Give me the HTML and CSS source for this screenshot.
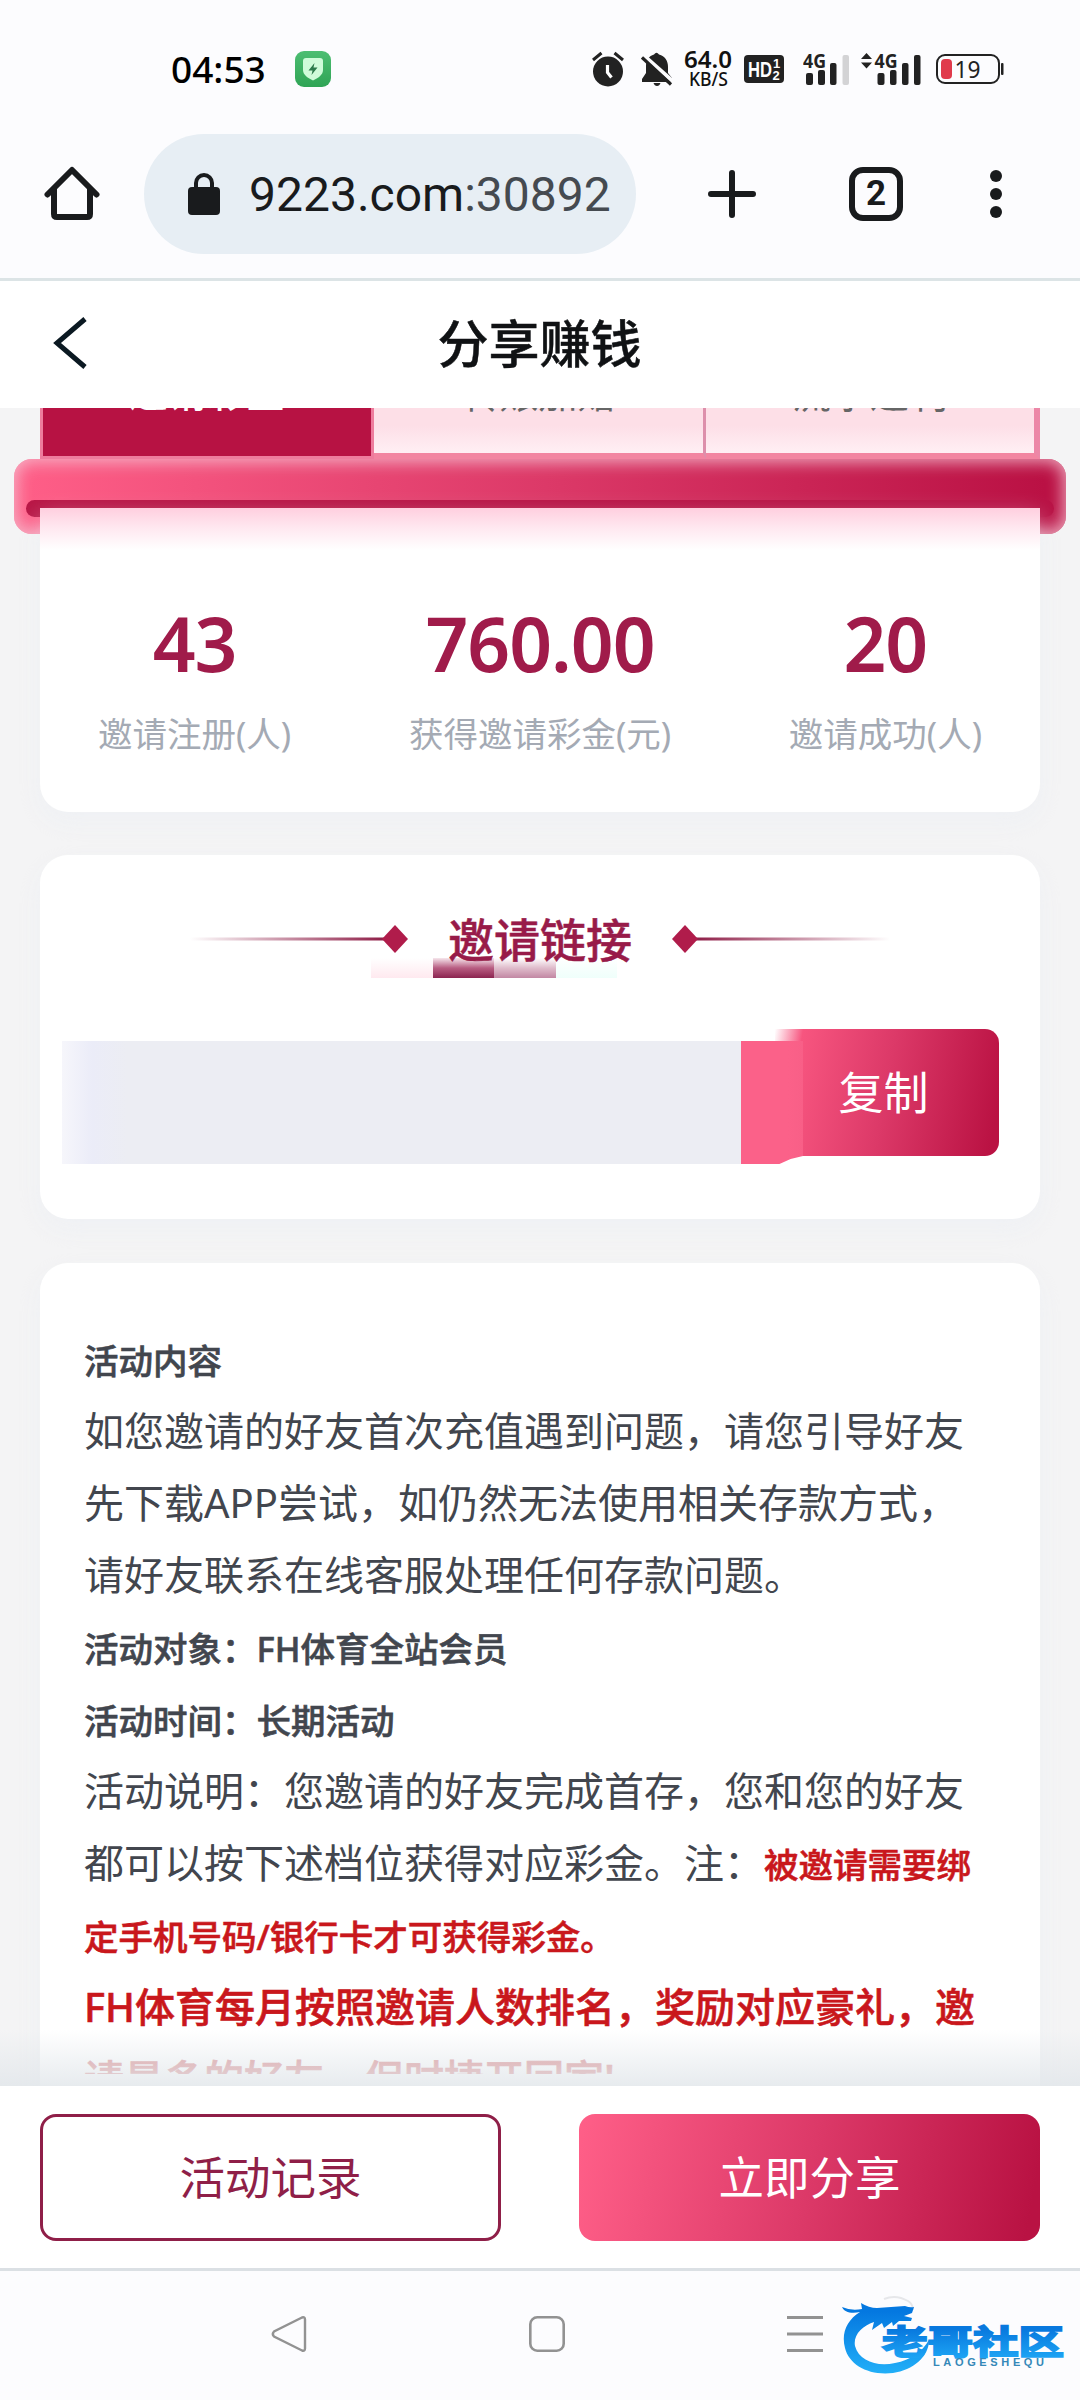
FILE: index.html
```html
<!DOCTYPE html>
<html lang="zh-CN">
<head>
<meta charset="utf-8">
<title>分享赚钱</title>
<link rel="stylesheet" href="styles.css">
</head>
<body>
<div class="status">
  <span class="clock">04:53</span>
  <svg class="shield" width="36" height="36" viewBox="0 0 36 36">
    <defs><linearGradient id="green" x2="0" y2="1"><stop offset="0" stop-color="#4dbe72"/><stop offset="1" stop-color="#2fa455"/></linearGradient></defs>
    <rect width="36" height="36" rx="9" fill="url(#green)"/>
    <path d="M11 7h14q3 0 3 3v9c0 5-5 8-10 10.500C13 27 8 24 8 19v-9q0-3 3-3z" fill="#cffbd9"/>
    <path d="M19.500 12l-6 7.500h4L16.500 24l6-7.500h-4z" fill="#2c7a4b"/>
  </svg>
  <div class="indicators">
    <svg width="32" height="36" viewBox="0 0 32 36">
      <circle cx="16" cy="20.500" r="15" fill="#222"/>
      <path d="M1 9l8.500-7M31 9l-8.500-7" stroke="#222" stroke-width="3" fill="none"/>
      <path d="M15.500 14v7.500l4 5" stroke="#fff" stroke-width="3.200" fill="none"/>
    </svg>
    <svg class="bell" width="32" height="36" viewBox="0 0 32 36">
      <path d="M1 31v-3l4-6v-7C5 9 8 5 13 3.500Q15.500 0 18 3.500C24 5 27 10 27 16v6l4 5v4z" fill="#222"/>
      <path d="M12.500 32h7q-1 3-3.500 3t-3.500-3z" fill="#222"/>
      <path d="M1 3L32 30.500" stroke="#fcfcfe" stroke-width="4"/>
      <path d="M1 6.500L30 33.500" stroke="#222" stroke-width="3.200"/>
    </svg>
    <svg class="speed" width="48" height="38" viewBox="0 0 48 38">
      <text x="0" y="18" class="rate" textLength="48" lengthAdjust="spacingAndGlyphs">64.0</text>
      <text x="5" y="36" class="unit" textLength="39" lengthAdjust="spacingAndGlyphs">KB/S</text>
    </svg>
    <svg class="hd" width="40" height="28" viewBox="0 0 40 28">
      <rect width="40" height="28" rx="4" fill="#222"/>
      <text x="4" y="22" class="hd-label" textLength="24" lengthAdjust="spacingAndGlyphs">HD</text>
      <text x="29" y="12.500" class="hd-num">1</text><text x="28.500" y="25" class="hd-num">2</text>
    </svg>
    <svg class="signal" width="46" height="34" viewBox="0 0 46 34">
      <text x="0" y="15.500" class="net" textLength="23" lengthAdjust="spacingAndGlyphs">4G</text>
      <g fill="#222"><rect x="3" y="21" width="7" height="12" rx="2"/><rect x="15" y="18" width="7" height="15" rx="2"/><rect x="27" y="11" width="6.500" height="22" rx="2"/></g>
      <rect x="39.500" y="3" width="6.500" height="30" rx="2" fill="#d3d3d5"/>
    </svg>
    <svg class="signal-two" width="60" height="34" viewBox="0 0 60 34">
      <path d="M0 7l5.500-6L11 7zM0 10.500l5.500 6 5.500-6z" fill="#222"/>
      <text x="13.500" y="15.500" class="net" textLength="23" lengthAdjust="spacingAndGlyphs">4G</text>
      <g fill="#222"><rect x="16.500" y="21" width="7" height="12" rx="2"/><rect x="29" y="18" width="6.500" height="15" rx="2"/><rect x="41" y="11" width="6.500" height="22" rx="2"/><rect x="53" y="3" width="6.500" height="30" rx="2"/></g>
    </svg>
    <svg class="battery" width="68" height="32" viewBox="0 0 68 32">
      <rect x="1" y="2" width="62" height="28" rx="8" fill="none" stroke="#222" stroke-width="2"/>
      <rect x="5" y="6" width="11" height="20" rx="4" fill="#e03a4b"/>
      <rect x="65" y="10" width="2.500" height="12" rx="1" fill="#222"/>
      <text x="18.500" y="24.500" class="charge" textLength="26" lengthAdjust="spacingAndGlyphs">19</text>
    </svg>
  </div>
</div>

<div class="toolbar">
  <svg class="home" width="56" height="58" viewBox="0 0 56 58">
    <path d="M3.500 30.500L28 6l24.500 24.500M10 25v25q0 3 3 3h30q3 0 3-3V25" fill="none" stroke="#191b1d" stroke-width="6" stroke-linejoin="round" stroke-linecap="round"/>
  </svg>
  <div class="address">
    <svg class="lock" width="32" height="42" viewBox="0 0 32 42">
      <rect y="14" width="32" height="28" rx="4" fill="#191b1d"/>
      <path d="M8 16v-6a8 8 0 0 1 16 0v6" fill="none" stroke="#191b1d" stroke-width="4"/>
    </svg>
    <span class="url">9223.com<span class="port">:30892</span></span>
  </div>
  <svg class="plus" width="48" height="48" viewBox="0 0 48 48"><path d="M3 24h42M24 3v42" stroke="#191b1d" stroke-width="6" stroke-linecap="round"/></svg>
  <div class="tab-count">2</div>
  <svg class="more" width="12" height="48" viewBox="0 0 12 48" fill="#191b1d"><circle cx="6" cy="6" r="6"/><circle cx="6" cy="24" r="6"/><circle cx="6" cy="42" r="6"/></svg>
</div>

<header class="header">
  <svg class="back" width="34" height="54" viewBox="0 0 34 54"><path d="M32 3L4 27l28 24" fill="none" stroke="#0b1922" stroke-width="5"/></svg>
  <h1>分享赚钱</h1>
</header>

<main class="page">
  <nav class="tabs">
    <div class="tab active"><span>邀请彩金</span></div>
    <div class="tab"><span>转账加赠</span></div>
    <div class="tab"><span>流水返利</span></div>
  </nav>
  <div class="rail"><div class="slot"></div></div>
  <section class="card stats">
    <div class="stat"><strong>43</strong><span>邀请注册(人)</span></div>
    <div class="stat"><strong>760.00</strong><span>获得邀请彩金(元)</span></div>
    <div class="stat"><strong>20</strong><span>邀请成功(人)</span></div>
  </section>
  <section class="card invite">
    <div class="invite-title">
      <svg width="218" height="30" viewBox="0 0 218 30">
        <defs><linearGradient id="lineL"><stop offset="0" stop-color="#8f1f48" stop-opacity="0"/><stop offset="1" stop-color="#8f1f48"/></linearGradient></defs>
        <rect x="0" y="13.500" width="194" height="3" fill="url(#lineL)"/><path d="M205 1l13 14-13 14-13-14z" fill="#b01c4b"/>
      </svg>
      <h2>邀请链接</h2>
      <svg width="218" height="30" viewBox="0 0 218 30">
        <defs><linearGradient id="lineR"><stop offset="0" stop-color="#8f1f48"/><stop offset="1" stop-color="#8f1f48" stop-opacity="0"/></linearGradient></defs>
        <rect x="24" y="13.500" width="194" height="3" fill="url(#lineR)"/><path d="M13 1l13 14-13 14L0 15z" fill="#b01c4b"/>
      </svg>
    </div>
    <div class="smudge"><i></i><i></i><i></i><i></i></div>
    <div class="link-row">
      <div class="link-field"></div>
      <div class="seam"></div>
      <button class="copy">复制</button>
    </div>
  </section>
  <section class="card rules">
    <div class="lines">
      <p><b>活动内容</b></p>
      <p>如您邀请的好友首次充值遇到问题，请您引导好友</p>
      <p>先下载APP尝试，如仍然无法使用相关存款方式，</p>
      <p>请好友联系在线客服处理任何存款问题。</p>
      <p><b>活动对象：FH体育全站会员</b></p>
      <p><b>活动时间：长期活动</b></p>
      <p>活动说明：您邀请的好友完成首存，您和您的好友</p>
      <p>都可以按下述档位获得对应彩金。注：<b class="red">被邀请需要绑</b></p>
      <p><b class="red">定手机号码/银行卡才可获得彩金。</b></p>
      <p class="red big">FH体育每月按照邀请人数排名，奖励对应豪礼，邀</p>
      <p class="red big faded">请最多的好友，保时捷开回家!</p>
    </div>
  </section>
  <div class="shade"></div>
</main>

<footer class="actions">
  <button class="btn outline">活动记录</button>
  <button class="btn solid">立即分享</button>
</footer>

<div class="sysnav">
  <svg width="36" height="38" viewBox="0 0 36 38"><path d="M31 2.500L3 16.500q-2.500 2.500 0 5L31 35.500q3 1 3-2v-29q0-3-3-2z" fill="none" stroke="#929292" stroke-width="2.400"/></svg>
  <svg width="36" height="38" viewBox="0 0 36 38"><rect x="1.300" y="2.300" width="33.400" height="33.400" rx="7" fill="none" stroke="#929292" stroke-width="2.600"/></svg>
  <svg width="36" height="38" viewBox="0 0 36 38"><path d="M0 2.500h36M0 19h36M0 35.500h36" stroke="#929292" stroke-width="3"/></svg>
  <svg class="logo" width="224" height="84" viewBox="0 0 224 84">
    <defs>
      <linearGradient id="sea" x1="0" y1="0" x2="0" y2="84" gradientUnits="userSpaceOnUse"><stop offset=".2" stop-color="#0478e0"/><stop offset="1" stop-color="#25b4fa"/></linearGradient>
      <linearGradient id="ink" x1="0" y1="34" x2="0" y2="66" gradientUnits="userSpaceOnUse"><stop offset="0" stop-color="#0878de"/><stop offset="1" stop-color="#1fa8f6"/></linearGradient>
    </defs>
    <path d="M42 4q12-5 24 2 5 3 5 9" fill="none" stroke="#e6e7ea" stroke-width="2"/>
    <path d="M0 12q9 4 20 2l-1-6q8 5 16 5l14-1 14-1q5 2 9 1l-2 6-8 3 8 2-1 3-12 0-6 5-1-4-8 6-2-5-10 7 2-8C20 31 11 40 13 51c4 15 22 21 40 17 16-3 27-11 34-23 0 17-16 30-36 33C27 81 7 70 3 53-1 38 5 25 18 17 9 19 2 17 0 12z" fill="url(#sea)"/>
    <text x="40" y="59" class="brand" textLength="182" lengthAdjust="spacingAndGlyphs" fill="url(#ink)" stroke="url(#ink)">老哥社区</text>
    <text x="91" y="71" class="brand-sub" textLength="111">LAOGESHEQU</text>
  </svg>
</div>
</body>
</html>
```
FILE: styles.css
```css
* { box-sizing: border-box; }
body {
  margin: 0;
  width: 1080px;
  height: 2400px;
  overflow: hidden;
  display: flex;
  flex-direction: column;
  background: #fcfcfe;
  font-family: "Noto Sans", "Noto Sans CJK SC", sans-serif;
}
svg { display: block; flex: none; }
h1, h2, p { margin: 0; }
button { font-family: inherit; padding: 0; border: 0; }

.status {
  flex: none;
  height: 110px;
  padding: 28px 76px 0 171px;
  display: flex;
  align-items: center;
}
.clock { width: 94px; font-size: 37px; font-weight: 500; line-height: 44px; color: #000; white-space: nowrap; }
.shield { margin-left: 30px; }
.indicators { margin-left: auto; display: flex; align-items: center; }
.bell { margin-left: 17px; }
.speed { margin-left: 11px; }
.rate { font: 600 24px "Noto Sans", sans-serif; fill: #111; }
.unit { font: 500 19px "Noto Sans", sans-serif; fill: #111; }
.hd { margin-left: 12px; }
.hd-label { font: 700 22px "Liberation Sans", sans-serif; fill: #fff; }
.hd-num { font: 700 13px "Liberation Sans", sans-serif; fill: #fff; }
.signal { margin-left: 19px; }
.signal-two { margin-left: 12px; }
.net { font: 700 20px "Noto Sans", sans-serif; fill: #222; }
.battery { margin-left: 15px; }
.charge { font: 400 24px "Noto Sans", sans-serif; fill: #222; }

.toolbar {
  flex: none;
  height: 171px;
  padding-left: 44px;
  border-bottom: 3px solid #dce4e6;
  display: flex;
  align-items: center;
}
.home { margin-top: -2px; }
.address {
  width: 492px;
  height: 120px;
  margin-left: 44px;
  padding-left: 44px;
  border-radius: 60px;
  background: #e7eef4;
  display: flex;
  align-items: center;
}
.url { margin-left: 29px; font: 48px Roboto, sans-serif; color: #191b1d; white-space: nowrap; }
.port { color: #454a50; }
.plus { margin-left: 72px; }
.tab-count {
  width: 54px;
  height: 54px;
  margin-left: 93px;
  border: 6px solid #191b1d;
  border-radius: 14px;
  display: flex;
  align-items: center;
  justify-content: center;
  font: 700 35px/42px "Roboto", sans-serif;
  color: #191b1d;
}
.more { margin-left: 87px; }

.header {
  flex: none;
  height: 127px;
  padding: 0 54px 4px 53px;
  background: #fff;
  display: grid;
  grid-template-columns: 34px 1fr 34px;
  align-items: center;
}
.header h1 { text-align: center; font-size: 51px; font-weight: 500; line-height: 60px; color: #101214; -webkit-text-stroke: .5px; }

.page {
  flex: none;
  height: 1678px;
  overflow: hidden;
  position: relative;
  padding: 0 40px;
  background: #f4f4f5;
}
.tabs {
  height: 51px;
  display: grid;
  grid-template-columns: 334px 332px 334px;
}
.tab {
  height: 51px;
  overflow: hidden;
  border-right: 3px solid #dd8fab;
  border-bottom: 6px solid #f285a1;
  background: linear-gradient(#fddfe7 40%, #ffeff4);
  text-align: center;
  font-size: 39px;
  color: #666;
}
.tab span { display: block; margin-top: -38px; line-height: 46px; }
.tab:last-child { border-right: 6px solid #ec87a7; }
.tab.active {
  background: #b71243;
  border: 3px solid #ee7c9d;
  border-top: 0;
  color: #fff;
  font-weight: 500;
}
.tab.active span { margin-top: -39px; }
.rail {
  height: 75px;
  margin: 0 -26px -26px;
  padding: 41px 12px 0;
  border-radius: 18px;
  background: linear-gradient(90deg, #ff5f88, #db3867 52%, #ba1144 98%);
  box-shadow: inset 0 0 16px 3px rgba(245, 190, 207, .85);
}
.slot { height: 17px; border-radius: 9px; background: linear-gradient(90deg, #b81545, #b81144); }

.card { position: relative; border-radius: 28px; background: #fff; box-shadow: 0 10px 24px rgba(235, 239, 244, .55); }
.stats {
  height: 304px;
  padding: 91px 58px 0;
  border-radius: 0 0 28px 28px;
  background: linear-gradient(#ffcfdf 0, #ffe8f0 20px, #fff 42px);
  display: flex;
  justify-content: space-between;
}
.stat { display: flex; flex-direction: column; align-items: center; }
.stat strong { font-size: 75px; font-weight: 600; line-height: 88px; color: #a01b4a; letter-spacing: -1px; }
.stat span { margin-top: 22px; font-size: 34.500px; line-height: 50px; color: #a4aab4; }

.invite { height: 364px; margin-top: 43px; padding: 54px 22px 0; }
.invite-title { position: relative; z-index: 1; height: 60px; display: flex; align-items: center; justify-content: center; gap: 40px; }
.invite-title h2 { font-size: 46px; font-weight: 500; line-height: 60px; color: #981b49; -webkit-text-stroke: .5px; }
.smudge { display: flex; width: 246px; height: 20px; margin: -11px 0 0 309px; }
.smudge i { flex: 1; }
.smudge i:nth-child(1) { background: linear-gradient(#fff, #ffe9ef); }
.smudge i:nth-child(2) { background: linear-gradient(#f6e6ec, #b85d82 50%, #8c2450); }
.smudge i:nth-child(3) { background: linear-gradient(#fff, #dfbccb 50%, #c287a3); }
.smudge i:nth-child(4) { background: linear-gradient(#fff, #effffb); }
.link-row { height: 135px; margin-top: 51px; display: flex; }
.link-field { width: 679px; height: 123px; margin-top: 12px; background: linear-gradient(90deg, #f6f6fb, #ebecf8 30px, #ecedf3 65px); }
.seam { position: relative; z-index: 1; width: 62px; height: 123px; margin-top: 12px; background: linear-gradient(90deg, #fb6189 75%, #f85f87); clip-path: polygon(0 0, 100% 0, 100% 115px, 80% 118px, 62% 123px, 0 123px); }
.copy {
  width: 224px;
  height: 127px;
  margin-left: -28px;
  padding: 0 7px 4px 0;
  border-radius: 0 14px 14px 0;
  background: linear-gradient(100deg, rgba(251, 96, 136, 0), #f7557f 28px, #dc3968 120px, #ba1243 96%);
  color: #fff;
  font-size: 45px;
}

.rules { height: 900px; margin-top: 44px; padding: 60px 44px 0; }
.lines { height: 751px; overflow: hidden; font-size: 40px; color: #42464e; }
.lines p { height: 72px; line-height: 72px; white-space: nowrap; }
.lines b { font-size: 34.500px; font-weight: 500; -webkit-text-stroke: .6px; }
.lines .red { color: #c9171c; }
.lines .big { font-weight: 500; -webkit-text-stroke: .6px; }
.lines .faded { color: #e09a9c; }
.shade { position: absolute; left: 0; right: 0; bottom: 0; height: 56px; background: linear-gradient(rgba(225, 230, 234, 0), rgba(225, 230, 234, .8)); }

.actions {
  flex: none;
  height: 185px;
  padding: 28px 40px 0;
  background: #fff;
  border-bottom: 3px solid #dbe0e4;
  display: grid;
  grid-template-columns: 461px 461px;
  justify-content: space-between;
}
.btn { height: 127px; padding-bottom: 5px; border-radius: 16px; font-size: 45.500px; }
.outline { border: 3px solid #8f1f48; background: #fff; color: #8f1f48; }
.solid { background: linear-gradient(100deg, #ff5f88, #dc3968 50%, #b91243 97%); color: #fff; }

.sysnav {
  flex: none;
  height: 129px;
  padding: 44px 0 0 271px;
  display: flex;
  align-items: flex-start;
  gap: 222px;
}
.logo { margin: -20px 0 0 -203px; }
.brand { font: 700 33px "Noto Sans CJK SC", sans-serif; stroke-width: 2; }
.brand-sub { font: 700 11px "Liberation Sans", sans-serif; fill: #3588b8; }
```
